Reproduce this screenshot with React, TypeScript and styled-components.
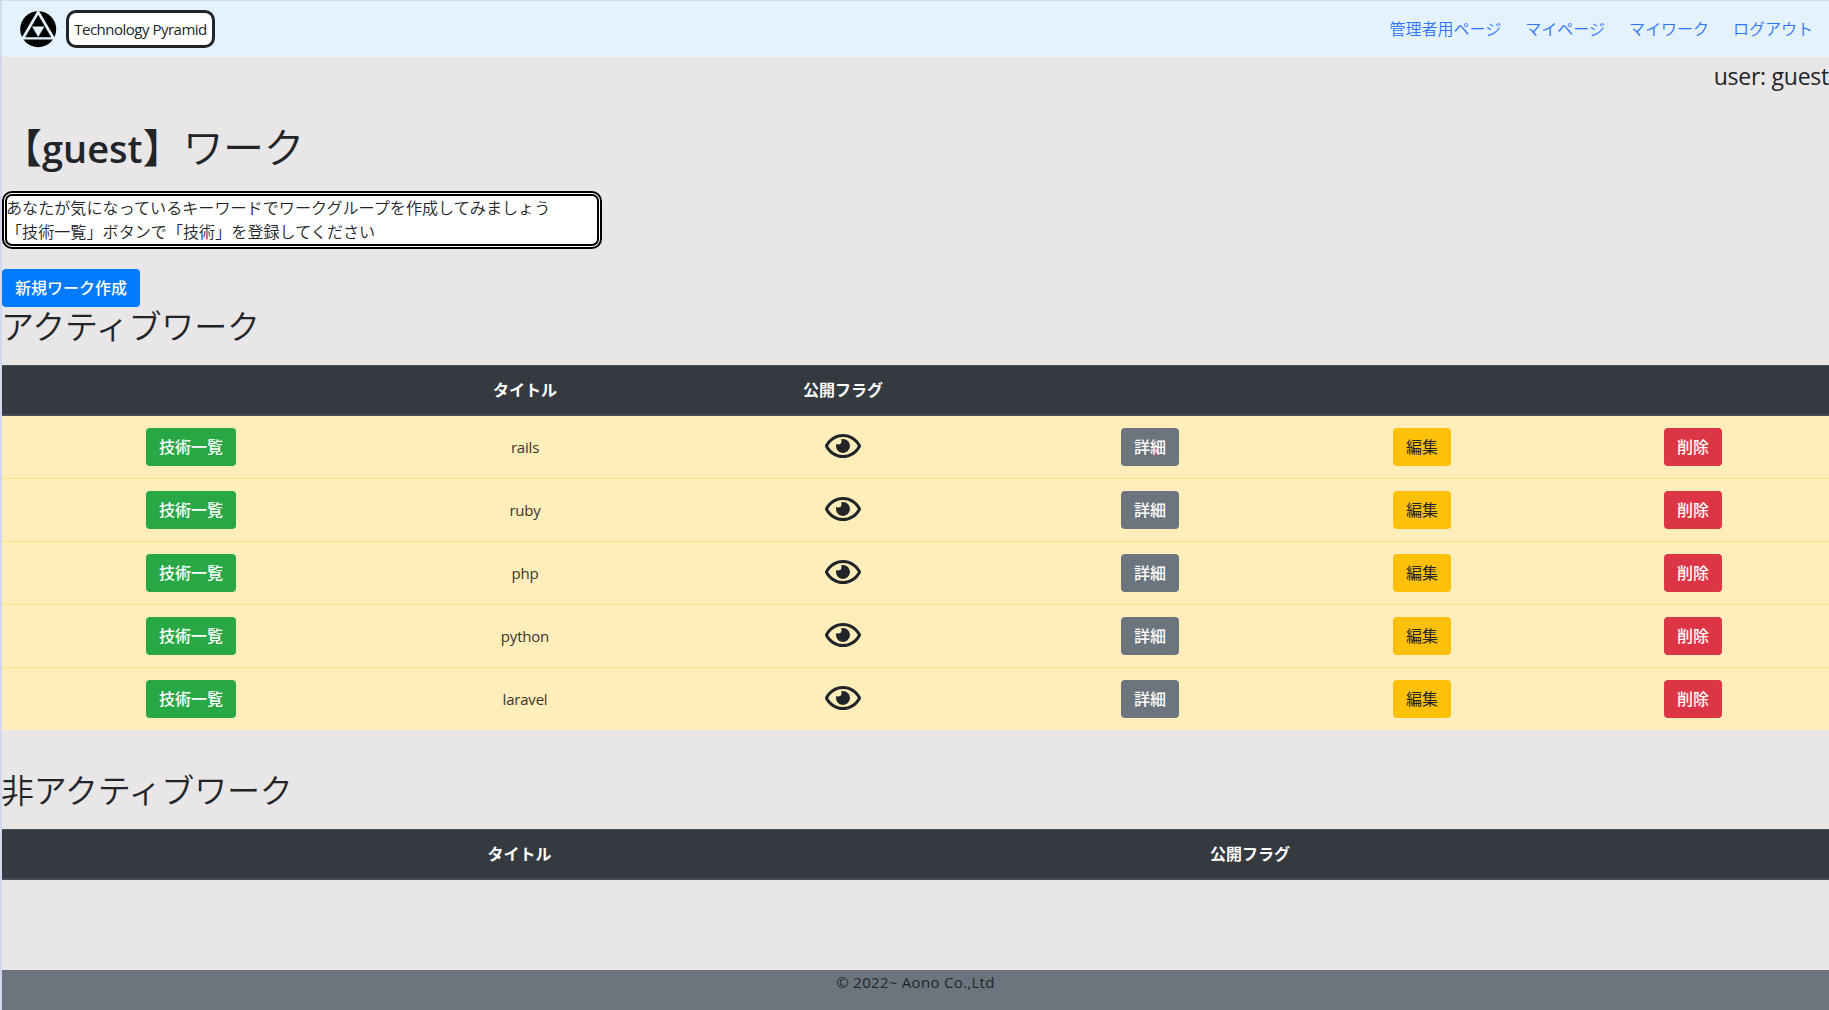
import React from "react";
import styled, { createGlobalStyle } from "styled-components";
import { FaRegEye } from "react-icons/fa";

const GlobalStyle = createGlobalStyle`
  * { box-sizing: border-box; }
  body {
    margin: 0;
    background: #e8e6e6;
    color: #212529;
    font-family: "Open Sans", "Noto Sans CJK JP", sans-serif;
    font-size: 16px;
    line-height: 24px;
    overflow: hidden;
  }
`;

const Page = styled.div`
  display: flex;
  flex-direction: column;
  height: 1010px;
  border-left: 2px solid #d2d9ee;
  border-top: 1px solid #d9dce2;
`;

const Navbar = styled.nav`
  display: flex;
  align-items: center;
  height: 56px;
  flex: none;
  padding: 0 16px 0 18px;
  background: #e3f2fd;
`;

const Brand = styled.div`
  width: 149px;
  height: 38px;
  margin-left: 9px;
  border: 3px solid #212529;
  border-radius: 10px;
  background: #fff;
  display: flex;
  align-items: center;
  justify-content: center;
`;

const Latin = styled.span<{ $size?: number; $track?: number; $weight?: number }>`
  font-size: ${(p) => p.$size ?? 15}px;
  letter-spacing: ${(p) => p.$track ?? 0}px;
  font-weight: ${(p) => p.$weight ?? 400};
  white-space: nowrap;
`;

const NavLinks = styled.div`
  display: flex;
  gap: 24px;
  margin-left: auto;
  padding-bottom: 2px;
`;

const NavLink = styled.a`
  color: #2f74ff;
  font-weight: 350;
  font-family: "Noto Sans CJK JP", sans-serif;
`;

const UserLine = styled.div`
  height: 39px;
  line-height: 39px;
  text-align: right;
`;

const Title = styled.h1`
  margin: 25px 0 0;
  height: 48px;
  line-height: 48px;
  font-size: 40px;
  font-weight: 500;
  font-family: "Noto Sans CJK JP", sans-serif;

  span { font-family: "Open Sans", sans-serif; }
`;

const TitleKana = styled.b`
  font-weight: 350;
  font-size: 41px;
  letter-spacing: -0.5px;
`;

const Notice = styled.div`
  width: 600px;
  height: 58px;
  margin-top: 22px;
  border: 5px double #000;
  border-radius: 10px;
  background: #fff;
  font-family: "Noto Sans CJK JP", sans-serif;
  font-weight: 350;
  font-size: 16.1px;
  line-height: 24px;
`;

const NoticeText = styled.p`
  margin: -1px 0 0 -1px;
  white-space: nowrap;
`;

const variants = {
  primary: ["#007bff", "#fff"],
  success: ["#28a745", "#fff"],
  secondary: ["#6c757d", "#fff"],
  warning: ["#ffc107", "#212529"],
  danger: ["#dc3545", "#fff"],
};

const Button = styled.button<{ $variant: keyof typeof variants }>`
  display: inline-block;
  height: 38px;
  padding: 0 13px 2px;
  border: 0;
  border-radius: 4px;
  background: ${(p) => variants[p.$variant][0]};
  color: ${(p) => variants[p.$variant][1]};
  font: ${(p) => (p.$variant === "warning" ? 400 : 500)} 16px/36px "Noto Sans CJK JP", sans-serif;
  vertical-align: top;
`;

const NewWork = styled.div`
  height: 38px;
  margin-top: 20px;
`;

const Heading = styled.h2<{ $top: number }>`
  margin: ${(p) => p.$top}px 0 0 -1px;
  height: 58px;
  font: 350 33px/36px "Noto Sans CJK JP", sans-serif;
  letter-spacing: -0.2px;
`;

const Table = styled.table`
  width: 100%;
  table-layout: fixed;
  border-collapse: separate;
  border-spacing: 0;
  text-align: center;
`;

const HeadCell = styled.th`
  height: 51px;
  padding: 0 0 2px;
  background: #343a40;
  border-top: 1px solid #454d55;
  border-bottom: 2px solid #454d55;
  color: #fff;
  font-family: "Noto Sans CJK JP", sans-serif;
  font-weight: 700;
`;

const Row = styled.tr`
  & + & td { border-top: 1px solid #ffdf7e; height: 63px; }
`;

const Cell = styled.td`
  height: 62px;
  padding: 12px 0;
  background: #ffeeba;
  vertical-align: top;

  &:last-child { padding-right: 3px; }
`;

const CellText = styled.div`
  height: 38px;
  line-height: 38px;
  color: #38362f;
`;

const EyeBox = styled.div`
  height: 36px;
  display: flex;
  justify-content: center;
  align-items: center;

  svg { width: 36px; height: 32px; }
`;

const Footer = styled.footer`
  height: 40px;
  margin-top: auto;
  background: #6c757d;
  text-align: center;
`;

const Logo = () => (
  <svg width="37" height="37" viewBox="0 0 37 37">
    <circle cx="18.2" cy="18.2" r="18" fill="#000" />
    <path d="M18.2 -1.5 L0.6 28.6 H35.8 Z" fill="#e3f2fd" />
    <path d="M18.2 3.8 L5.2 26.2 H31.2 Z" fill="#000" />
    <path d="M12 15.6 H24.4 L18.2 26 Z" fill="#e3f2fd" />
  </svg>
);

const works = ["rails", "ruby", "php", "python", "laravel"];
const links = ["管理者用ページ", "マイページ", "マイワーク", "ログアウト"];

export default function App() {
  return (
    <>
      <GlobalStyle />
      <Page>
        <Navbar>
          <Logo />
          <Brand>
            <Latin $track={-0.5}>Technology Pyramid</Latin>
          </Brand>
          <NavLinks>
            {links.map((l) => (
              <NavLink key={l}>{l}</NavLink>
            ))}
          </NavLinks>
        </Navbar>
        <UserLine>
          <Latin $size={23} $track={-0.25}>user: guest</Latin>
        </UserLine>
        <Title>
          【<Latin $size={38} $weight={600}>guest</Latin>】<TitleKana>ワーク</TitleKana>
        </Title>
        <Notice>
          <NoticeText>
            あなたが気になっているキーワードでワークグループを作成してみましょう
            <br />
            「技術一覧」ボタンで「技術」を登録してください
          </NoticeText>
        </Notice>
        <NewWork>
          <Button $variant="primary">新規ワーク作成</Button>
        </NewWork>
        <Heading $top={0}>アクティブワーク</Heading>
        <Table>
          <colgroup>
            {[378, 290, 346, 268, 276, 269].map((w, i) => (
              <col key={i} width={w} />
            ))}
          </colgroup>
          <thead>
            <tr>
              <HeadCell />
              <HeadCell>タイトル</HeadCell>
              <HeadCell>公開フラグ</HeadCell>
              <HeadCell />
              <HeadCell />
              <HeadCell />
            </tr>
          </thead>
          <tbody>
            {works.map((w) => (
              <Row key={w}>
                <Cell><Button $variant="success">技術一覧</Button></Cell>
                <Cell><CellText><Latin $track={-0.2}>{w}</Latin></CellText></Cell>
                <Cell><EyeBox><FaRegEye /></EyeBox></Cell>
                <Cell><Button $variant="secondary">詳細</Button></Cell>
                <Cell><Button $variant="warning">編集</Button></Cell>
                <Cell><Button $variant="danger">削除</Button></Cell>
              </Row>
            ))}
          </tbody>
        </Table>
        <Heading $top={41}>非アクティブワーク</Heading>
        <Table>
          <colgroup>
            {[1035, 426, 366].map((w, i) => (
              <col key={i} width={w} />
            ))}
          </colgroup>
          <thead>
            <tr>
              <HeadCell>タイトル</HeadCell>
              <HeadCell>公開フラグ</HeadCell>
              <HeadCell />
            </tr>
          </thead>
        </Table>
        <Footer>
          <Latin $track={0.3}>© 2022~ Aono Co.,Ltd</Latin>
        </Footer>
      </Page>
    </>
  );
}
